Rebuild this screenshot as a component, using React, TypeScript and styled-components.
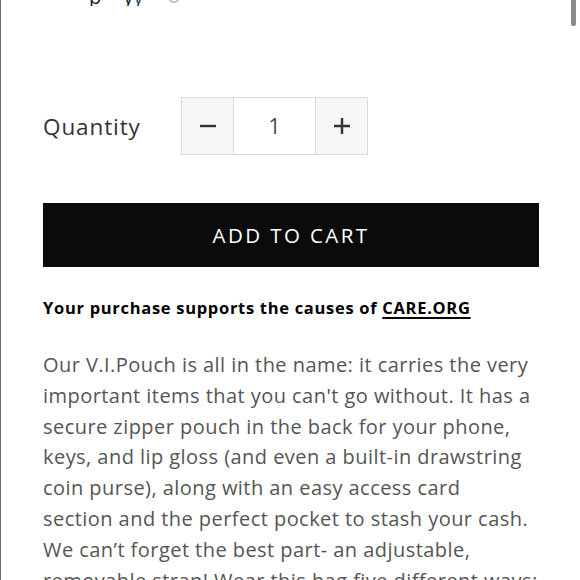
import React from "react";
import styled, { createGlobalStyle } from "styled-components";

const Global = createGlobalStyle`
  html, body { margin: 0; padding: 0; background: #fff; }
  body { font-family: "Open Sans", Lato, sans-serif; }
`;

const Page = styled.div`
  position: relative;
  border-left: 1px solid #6a6a6a;
  padding: 0 41px 0 42px;
  box-sizing: border-box;
  overflow: hidden;
  height: 580px;
`;

const Scroll = styled.div`
  position: absolute;
  top: 0;
  right: 4px;
  width: 5px;
  height: 26px;
  background: #8a8a8a;
  border-radius: 0 0 2px 2px;
`;

const TopClip = styled.div`
  height: 6px;
  overflow: hidden;
  display: flex;
  align-items: flex-end;
  padding-left: 46px;
`;

const TopText = styled.span<{ $c: string; $ml?: number }>`
  font-size: 20px;
  line-height: 20px;
  color: ${(p) => p.$c};
  margin-left: ${(p) => p.$ml ?? 0}px;
  margin-bottom: -1px;
`;

const QtyRow = styled.div`
  display: flex;
  align-items: center;
  gap: 40px;
  margin-top: 91px;
`;

const QtyLabel = styled.div`
  font-size: 22.5px;
  color: #333;
  width: 98px;
  letter-spacing: 0.9px;
`;

const QtyBox = styled.div`
  display: flex;
  border: 1px solid #dcdcdc;
  height: 56px;
`;

const QtyBtn = styled.div`
  width: 51px;
  background: #f6f6f7;
  display: flex;
  align-items: center;
  justify-content: center;
`;

const QtyInput = styled.div`
  width: 81px;
  border-left: 1px solid #dcdcdc;
  border-right: 1px solid #dcdcdc;
  display: flex;
  align-items: center;
  justify-content: center;
  font-size: 21px;
  color: #444;
  background: #fff;
`;

const CartButton = styled.div`
  margin-top: 48px;
  height: 64px;
  background: #0b0b0b;
  color: #fff;
  display: flex;
  align-items: center;
  justify-content: center;
  font-size: 20.5px;
  letter-spacing: 2.4px;
  font-weight: 500;
`;

const Support = styled.div`
  margin-top: 29px;
  font-size: 16.5px;
  line-height: 24px;
  font-weight: 700;
  color: #000;
  letter-spacing: 0.7px;
`;

const Link = styled.span`
  text-decoration: underline;
  text-underline-offset: 3px;
  text-decoration-thickness: 1.5px;
`;

const Para = styled.p`
  margin: 30px 0 0;
  font-size: 20px;
  line-height: 30.8px;
  color: #555;
  letter-spacing: 0.45px;
  white-space: nowrap;
`;

const lines = [
  "Our V.I.Pouch is all in the name: it carries the very",
  "important items that you can't go without. It has a",
  "secure zipper pouch in the back for your phone,",
  "keys, and lip gloss (and even a built-in drawstring",
  "coin purse), along with an easy access card",
  "section and the perfect pocket to stash your cash.",
  "We can\u2019t forget the best part- an adjustable,",
  "removable strap! Wear this bag five different ways:",
];

export default function App() {
  return (
    <>
      <Global />
      <Page>
        <Scroll />
        <TopClip>
          <TopText $c="#222">p</TopText>
          <TopText $c="#222" $ml={22}>y</TopText>
          <TopText $c="#1f4e8c">y</TopText>
          <TopText $c="#bbb" $ml={24}>○</TopText>
        </TopClip>
        <QtyRow>
          <QtyLabel>Quantity</QtyLabel>
          <QtyBox>
            <QtyBtn>
              <svg width="18" height="18" viewBox="0 0 18 18">
                <path d="M1 9h16" stroke="#333" strokeWidth="2.4" />
              </svg>
            </QtyBtn>
            <QtyInput>1</QtyInput>
            <QtyBtn>
              <svg width="18" height="18" viewBox="0 0 18 18">
                <path d="M1 9h16M9 1v16" stroke="#333" strokeWidth="2.4" />
              </svg>
            </QtyBtn>
          </QtyBox>
        </QtyRow>
        <CartButton>ADD TO CART</CartButton>
        <Support>
          Your purchase supports the causes of <Link>CARE.ORG</Link>
        </Support>
        <Para>
          {lines.map((l, i) => (
            <React.Fragment key={i}>
              {l}
              {i < lines.length - 1 && <br />}
            </React.Fragment>
          ))}
        </Para>
      </Page>
    </>
  );
}
